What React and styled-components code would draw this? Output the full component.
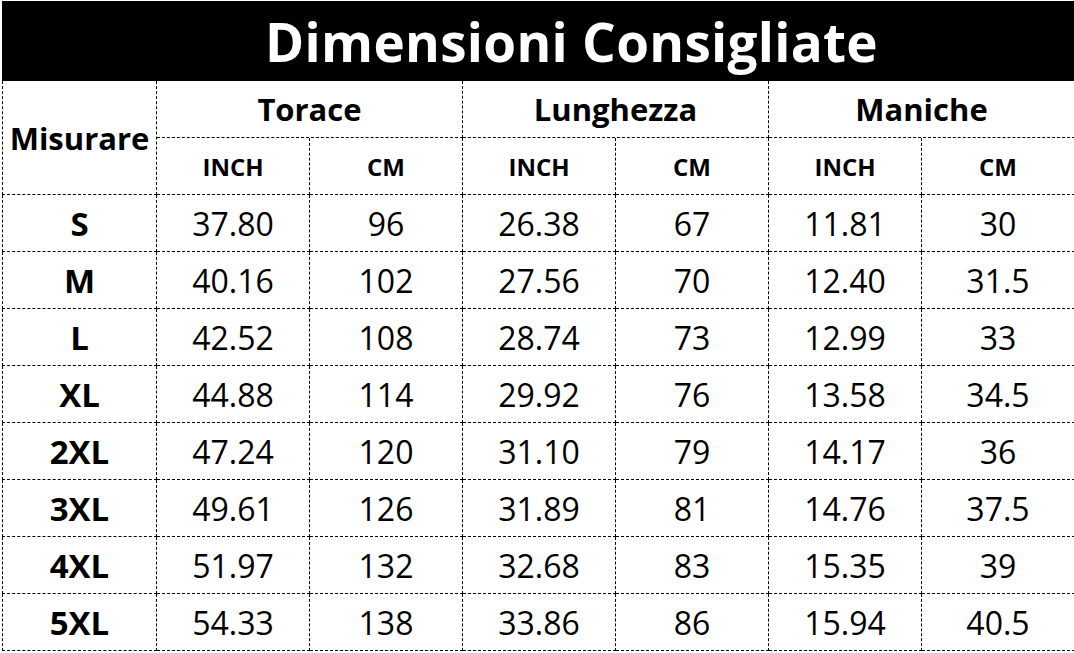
import React from "react";
import styled, { createGlobalStyle } from "styled-components";

const GlobalStyle = createGlobalStyle`
  html, body {
    margin: 0;
    background: #fff;
  }
  body {
    font-family: "Open Sans", "Noto Sans", sans-serif;
    color: #000;
  }
`;

const Sheet = styled.div`
  padding: 1px 0 0 2px;
  width: 1074px;
  height: 653px;
  box-sizing: border-box;
  overflow: hidden;
`;

const Grid = styled.div`
  display: grid;
  grid-template-columns: 155px repeat(6, 153px);
  grid-template-rows: 80px repeat(10, 57px);
  width: 1073px;
`;

const Title = styled.div`
  grid-column: 1 / -1;
  background: #000;
  color: #fff;
  display: flex;
  align-items: center;
  justify-content: center;
  padding-left: 66px;
  font-size: 53px;
  font-weight: 700;
  letter-spacing: 0.3px;
`;

const Cell = styled.div`
  display: flex;
  align-items: center;
  justify-content: center;
  border-right: 1px dashed #000;
  border-bottom: 1px dashed #000;
  border-left: ${(p) => (p.$first ? "1px dashed #000" : "none")};
  font-size: ${(p) => p.$size || 32}px;
  font-weight: ${(p) => (p.$bold ? 700 : 400)};
  grid-column: ${(p) => p.$span || "auto"};
  grid-row: ${(p) => p.$rows || "auto"};
  white-space: nowrap;
`;

const groups = ["Torace", "Lunghezza", "Maniche"];

const rows = [
  ["S", "37.80", "96", "26.38", "67", "11.81", "30"],
  ["M", "40.16", "102", "27.56", "70", "12.40", "31.5"],
  ["L", "42.52", "108", "28.74", "73", "12.99", "33"],
  ["XL", "44.88", "114", "29.92", "76", "13.58", "34.5"],
  ["2XL", "47.24", "120", "31.10", "79", "14.17", "36"],
  ["3XL", "49.61", "126", "31.89", "81", "14.76", "37.5"],
  ["4XL", "51.97", "132", "32.68", "83", "15.35", "39"],
  ["5XL", "54.33", "138", "33.86", "86", "15.94", "40.5"],
];

export default function App() {
  return (
    <>
      <GlobalStyle />
      <Sheet>
        <Grid>
          <Title>Dimensioni Consigliate</Title>
          <Cell $first $bold $size={31} $rows="span 2">
            Misurare
          </Cell>
          {groups.map((g) => (
            <Cell key={g} $bold $size={31} $span="span 2">
              {g}
            </Cell>
          ))}
          {groups.map((g) => (
            <React.Fragment key={g + "-u"}>
              <Cell $bold $size={24}>INCH</Cell>
              <Cell $bold $size={24}>CM</Cell>
            </React.Fragment>
          ))}
          {rows.map((r) =>
            r.map((v, i) => (
              <Cell
                key={r[0] + i}
                $first={i === 0}
                $bold={i === 0}
                $size={i === 0 ? 33 : 32}
              >
                {v}
              </Cell>
            ))
          )}
        </Grid>
      </Sheet>
    </>
  );
}
